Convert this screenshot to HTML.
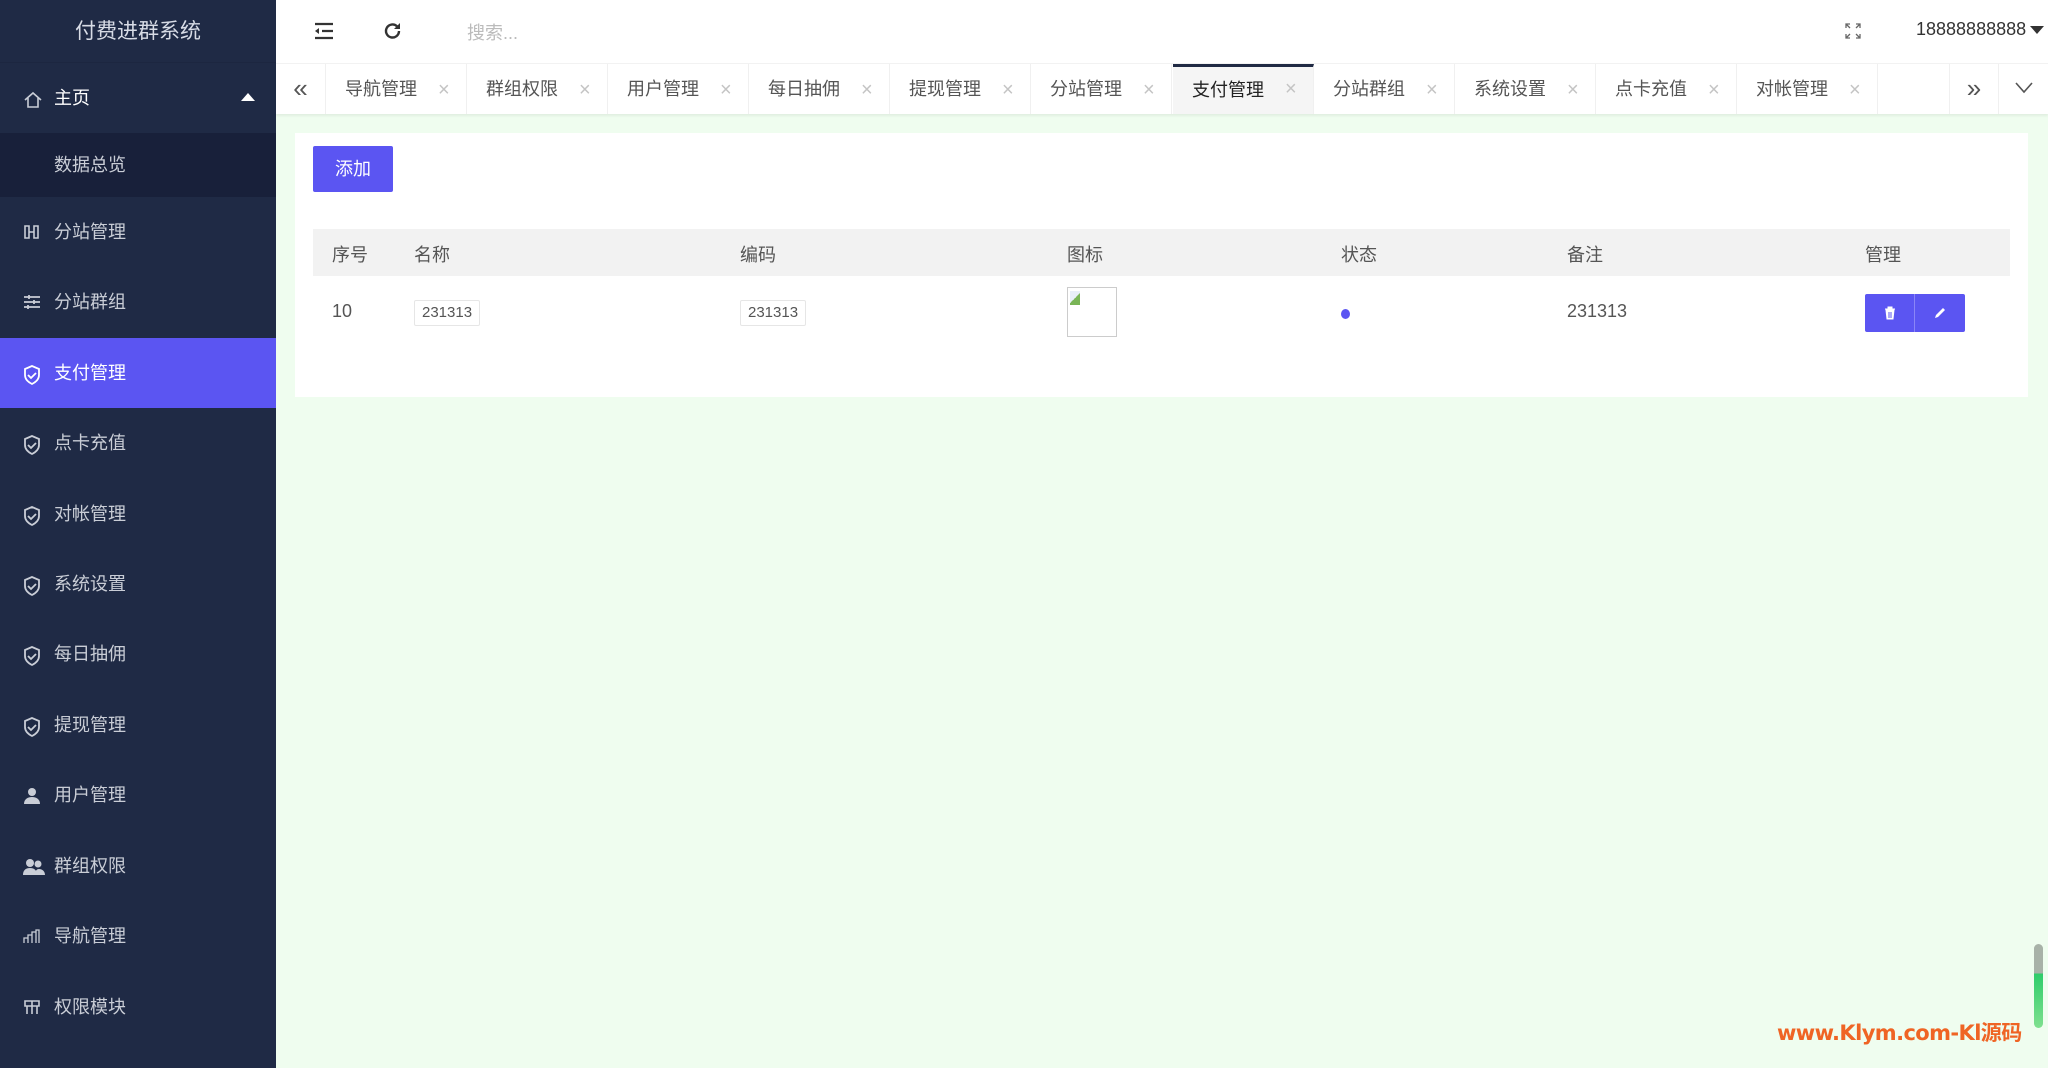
<!DOCTYPE html>
<html><head><meta charset="utf-8">
<style>
*{margin:0;padding:0;box-sizing:border-box}
body{width:2048px;height:1068px;overflow:hidden;font-family:"Liberation Sans","Noto Sans CJK SC",sans-serif;background:#effdef;position:relative;color:#555}
.side{position:absolute;left:0;top:0;width:276px;height:1068px;background:#1f2a45}
.logo{height:63px;line-height:63px;text-align:center;color:#d8dce6;font-size:21px;border-bottom:1px solid #1c2640}
.item{position:absolute;left:0;width:276px;height:70px;line-height:70px;color:#c9cdd6;font-size:18px;padding-left:54px}
.item svg{position:absolute;left:23px;top:27px}
.sub{background:#18203a}
.act{background:#5b55f2;color:#fff}
.top{position:absolute;left:276px;top:0;right:0;height:63px;background:#fff}
.tabs{position:absolute;left:276px;top:63px;right:0;height:51px;background:#fff;border-top:1px solid #f2f2f2;box-shadow:0 2px 2px rgba(0,0,0,.06)}
.tab{position:absolute;top:0;height:50px;width:141px;border-right:1px solid #f0f0f0;line-height:50px;font-size:18px;color:#555;padding-left:19px}
.tab .x{position:absolute;left:112px;top:1px;color:#c4c4c4;font-size:20px}
.tab.on{background:#f5f5f5;color:#222;border-top:3px solid #202a44;line-height:46px}
.tab.on .x{top:-1px}
.card{position:absolute;left:295px;top:133px;width:1733px;height:264px;background:#fff}
.btn{position:absolute;left:18px;top:13px;width:80px;height:46px;background:#5b55f2;color:#fff;font-size:18px;line-height:46px;text-align:center;border-radius:2px}
.thead{position:absolute;left:18px;top:96px;width:1697px;height:47px;background:#f2f2f2}
.c{position:absolute;font-size:18px;color:#555}
.tag{position:absolute;border:1px solid #e6e6e6;font-size:15px;padding:0 7px;height:26px;line-height:24px;color:#555;border-radius:2px}
</style></head><body>
<div class="side">
 <div class="logo">付费进群系统</div>
 <div class="item" style="top:63px;color:#fff"><svg width="20" height="20" viewBox="0 0 20 20"><path d="M2 10L10 3l8 7M5 8v9h10V8" fill="none" stroke="#c9cdd6" stroke-width="1.6"/></svg>主页<span style="position:absolute;left:241px;top:30px;border-left:7px solid transparent;border-right:7px solid transparent;border-bottom:8px solid #fff"></span></div>
 <div class="item sub" style="top:133px;height:64px;line-height:64px">数据总览</div>
 <div class="item" style="top:197px"><svg width="18" height="16" viewBox="0 0 18 16"><path d="M2 2h4v12H2zM11 2h4v12h-4zM6 8h5" fill="none" stroke="#c9cdd6" stroke-width="1.6"/></svg>分站管理</div>
 <div class="item" style="top:267px"><svg width="18" height="16" viewBox="0 0 18 16"><path d="M1 3h16M1 8h16M1 13h16M6 1v4M11 6v4M5 11v4" stroke="#c9cdd6" stroke-width="1.8"/></svg>分站群组</div>
 <div class="item act" style="top:338px"><svg width="18" height="20" viewBox="0 0 18 20"><path d="M9 1L2 4v6c0 4 3 7 7 9 4-2 7-5 7-9V4z M5 10l3 3 5-5" fill="none" stroke="#fff" stroke-width="1.8"/></svg>支付管理</div>
 <div class="item" style="top:408px"><svg width="18" height="20" viewBox="0 0 18 20"><path d="M9 1L2 4v6c0 4 3 7 7 9 4-2 7-5 7-9V4z M5 10l3 3 5-5" fill="none" stroke="#c9cdd6" stroke-width="1.8"/></svg>点卡充值</div>
 <div class="item" style="top:479px"><svg width="18" height="20" viewBox="0 0 18 20"><path d="M9 1L2 4v6c0 4 3 7 7 9 4-2 7-5 7-9V4z M5 10l3 3 5-5" fill="none" stroke="#c9cdd6" stroke-width="1.8"/></svg>对帐管理</div>
 <div class="item" style="top:549px"><svg width="18" height="20" viewBox="0 0 18 20"><path d="M9 1L2 4v6c0 4 3 7 7 9 4-2 7-5 7-9V4z M5 10l3 3 5-5" fill="none" stroke="#c9cdd6" stroke-width="1.8"/></svg>系统设置</div>
 <div class="item" style="top:619px"><svg width="18" height="20" viewBox="0 0 18 20"><path d="M9 1L2 4v6c0 4 3 7 7 9 4-2 7-5 7-9V4z M5 10l3 3 5-5" fill="none" stroke="#c9cdd6" stroke-width="1.8"/></svg>每日抽佣</div>
 <div class="item" style="top:690px"><svg width="18" height="20" viewBox="0 0 18 20"><path d="M9 1L2 4v6c0 4 3 7 7 9 4-2 7-5 7-9V4z M5 10l3 3 5-5" fill="none" stroke="#c9cdd6" stroke-width="1.8"/></svg>提现管理</div>
 <div class="item" style="top:760px"><svg width="18" height="18" viewBox="0 0 18 18"><circle cx="9" cy="5" r="4" fill="#c9cdd6"/><path d="M1 17c0-5 4-7 8-7s8 2 8 7z" fill="#c9cdd6"/></svg>用户管理</div>
 <div class="item" style="top:831px"><svg width="22" height="18" viewBox="0 0 22 18"><circle cx="7" cy="5" r="4" fill="#c9cdd6"/><circle cx="15" cy="6" r="3.5" fill="#c9cdd6"/><path d="M0 17c0-5 3-7 7-7s7 2 7 7zM12 17c0-3 1-6 4-6s6 2 6 6z" fill="#c9cdd6"/></svg>群组权限</div>
 <div class="item" style="top:901px"><svg width="18" height="16" viewBox="0 0 18 16"><path d="M1 15V10h4v5M5 15V7h4v8M9 15V4h4v11M13 15V2h3v13" fill="none" stroke="#c9cdd6" stroke-width="1.3"/></svg>导航管理</div>
 <div class="item" style="top:972px"><svg width="18" height="16" viewBox="0 0 18 16"><path d="M2 2h14v5H2zM4 7v8M9 7v8M14 7v8M9 2v5" fill="none" stroke="#c9cdd6" stroke-width="1.6"/></svg>权限模块</div>
</div>
<div class="top">
 <svg style="position:absolute;left:38px;top:22px" width="20" height="18" viewBox="0 0 20 18"><path d="M1 2h18M8 9h11M1 16h18" stroke="#333" stroke-width="2.2"/><path d="M5 6L1 9l4 3z" fill="#333"/></svg>
 <svg style="position:absolute;left:107px;top:21px" width="20" height="20" viewBox="0 0 20 20"><path d="M16 10a6.5 6.5 0 1 1-2-4.7" fill="none" stroke="#333" stroke-width="2.4"/><path d="M17 2v6h-6z" fill="#333"/></svg>
 <div style="position:absolute;left:191px;top:19px;font-size:18px;color:#bbb">搜索...</div>
 <svg style="position:absolute;left:1569px;top:23px" width="16" height="16" viewBox="0 0 16 16"><path d="M1 5V1h4M11 1h4v4M15 11v4h-4M5 15H1v-4M1 1l4 4M15 1l-4 4M15 15l-4-4M1 15l4-4" fill="none" stroke="#666" stroke-width="1.3"/></svg>
 <div style="position:absolute;left:1640px;top:19px;font-size:18px;color:#333">18888888888</div>
 <span style="position:absolute;left:1754px;top:26px;border-left:7px solid transparent;border-right:7px solid transparent;border-top:8px solid #333"></span>
</div>
<div class="tabs">
 <div style="position:absolute;left:0;top:0;width:50px;height:50px;border-right:1px solid #f0f0f0;text-align:center;line-height:48px;font-size:26px;color:#555">«</div>
 <div class="tab" style="left:50px">导航管理<span class="x">×</span></div>
 <div class="tab" style="left:191px">群组权限<span class="x">×</span></div>
 <div class="tab" style="left:332px">用户管理<span class="x">×</span></div>
 <div class="tab" style="left:473px">每日抽佣<span class="x">×</span></div>
 <div class="tab" style="left:614px">提现管理<span class="x">×</span></div>
 <div class="tab" style="left:755px">分站管理<span class="x">×</span></div>
 <div class="tab on" style="left:897px">支付管理<span class="x">×</span></div>
 <div class="tab" style="left:1038px">分站群组<span class="x">×</span></div>
 <div class="tab" style="left:1179px">系统设置<span class="x">×</span></div>
 <div class="tab" style="left:1320px">点卡充值<span class="x">×</span></div>
 <div class="tab" style="left:1461px">对帐管理<span class="x">×</span></div>
 <div style="position:absolute;left:1673px;top:0;width:50px;height:50px;border-left:1px solid #f0f0f0;border-right:1px solid #f0f0f0;text-align:center;line-height:48px;font-size:26px;color:#555">»</div>
 <svg style="position:absolute;left:1739px;top:18px" width="18" height="12" viewBox="0 0 18 12"><path d="M1 1l8 9 8-9" fill="none" stroke="#555" stroke-width="1.6"/></svg>
</div>
<div class="card">
 <div class="btn">添加</div>
 <div class="thead">
  <div class="c" style="left:19px;top:12px">序号</div>
  <div class="c" style="left:101px;top:12px">名称</div>
  <div class="c" style="left:427px;top:12px">编码</div>
  <div class="c" style="left:754px;top:12px">图标</div>
  <div class="c" style="left:1028px;top:12px">状态</div>
  <div class="c" style="left:1254px;top:12px">备注</div>
  <div class="c" style="left:1552px;top:12px">管理</div>
 </div>
 <div class="c" style="left:37px;top:168px">10</div>
 <div class="tag" style="left:119px;top:167px">231313</div>
 <div class="tag" style="left:445px;top:167px">231313</div>
 <div style="position:absolute;left:772px;top:154px;width:50px;height:50px;border:1px solid #ccc"><div style="position:absolute;left:2px;top:3px;width:10px;height:14px;background:linear-gradient(135deg,#e8eef8 50%,#7ab557 50%)"></div></div>
 <div style="position:absolute;left:1046px;top:176px;width:9px;height:10px;border-radius:50%;background:#5b55f2"></div>
 <div class="c" style="left:1272px;top:168px">231313</div>
 <div style="position:absolute;left:1570px;top:161px;width:100px;height:38px;background:#5b55f2;border-radius:2px">
  <div style="position:absolute;left:49px;top:0;width:1px;height:38px;background:#8a85f7"></div>
  <svg style="position:absolute;left:19px;top:12px" width="12" height="14" viewBox="0 0 12 14"><path d="M1 3h10M4 3V1h4v2M2 4h8l-1 9H3z" fill="#fff" stroke="#fff" stroke-width="1"/><path d="M5 6v6M7 6v6" stroke="#5b55f2" stroke-width="1"/></svg>
  <svg style="position:absolute;left:68px;top:12px" width="14" height="14" viewBox="0 0 14 14"><path d="M2 12l1-3 7-7 2 2-7 7z" fill="#fff"/></svg>
 </div>
</div>
<div style="position:absolute;left:1777px;top:1017px;font-size:21px;font-weight:bold;color:#ef6424;font-family:'DejaVu Sans','Noto Sans CJK SC',sans-serif;letter-spacing:-0.6px">www.Klym.com-Kl源码</div>
<div style="position:absolute;left:2034px;top:944px;width:9px;height:84px;border-radius:5px;background:linear-gradient(#a8b2a8 0 35%,#2ecc6a 35%,#7fe08f 100%)"></div>
</body></html>
